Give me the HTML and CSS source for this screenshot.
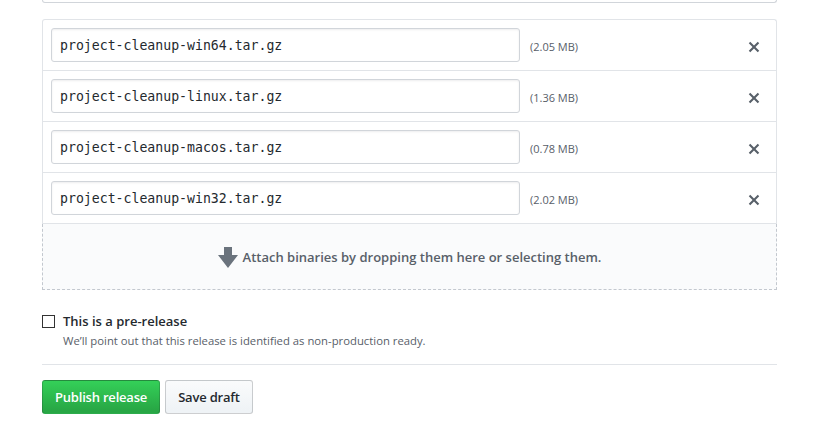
FILE: index.html
```html
<!DOCTYPE html>
<html>
<head>
<meta charset="utf-8">
<link rel="stylesheet" href="styles.css">
</head>
<body>
<div class="page">
  <div class="prev-box"></div>

  <div class="files">
    <div class="file-row">
      <input class="file-name" type="text" value="project-cleanup-win64.tar.gz">
      <span class="file-size">(2.05 MB)</span>
      <button class="remove" aria-label="Remove"><svg width="12" height="16" viewBox="0 0 12 16"><path fill="currentColor" d="M7.48 8l3.75 3.75-1.48 1.48L6 9.48l-3.75 3.75-1.48-1.48L4.52 8 .77 4.25l1.48-1.48L6 6.52l3.75-3.75 1.48 1.48L7.48 8z"/></svg></button>
    </div>
    <div class="file-row">
      <input class="file-name" type="text" value="project-cleanup-linux.tar.gz">
      <span class="file-size">(1.36 MB)</span>
      <button class="remove" aria-label="Remove"><svg width="12" height="16" viewBox="0 0 12 16"><path fill="currentColor" d="M7.48 8l3.75 3.75-1.48 1.48L6 9.48l-3.75 3.75-1.48-1.48L4.52 8 .77 4.25l1.48-1.48L6 6.52l3.75-3.75 1.48 1.48L7.48 8z"/></svg></button>
    </div>
    <div class="file-row">
      <input class="file-name" type="text" value="project-cleanup-macos.tar.gz">
      <span class="file-size">(0.78 MB)</span>
      <button class="remove" aria-label="Remove"><svg width="12" height="16" viewBox="0 0 12 16"><path fill="currentColor" d="M7.48 8l3.75 3.75-1.48 1.48L6 9.48l-3.75 3.75-1.48-1.48L4.52 8 .77 4.25l1.48-1.48L6 6.52l3.75-3.75 1.48 1.48L7.48 8z"/></svg></button>
    </div>
    <div class="file-row">
      <input class="file-name" type="text" value="project-cleanup-win32.tar.gz">
      <span class="file-size">(2.02 MB)</span>
      <button class="remove" aria-label="Remove"><svg width="12" height="16" viewBox="0 0 12 16"><path fill="currentColor" d="M7.48 8l3.75 3.75-1.48 1.48L6 9.48l-3.75 3.75-1.48-1.48L4.52 8 .77 4.25l1.48-1.48L6 6.52l3.75-3.75 1.48 1.48L7.48 8z"/></svg></button>
    </div>
  </div>
  <div class="drop-zone">
    <svg class="drop-icon" width="20" height="21" viewBox="0 3 10 10.5"><path fill="currentColor" d="M7 7V3H3v4H0l5 6.5 5-6.5H7z"/></svg>
    <span>Attach binaries by dropping them here or selecting them.</span>
  </div>

  <div class="prerelease">
    <label class="check-label"><span class="checkbox"></span>This is a pre-release</label>
    <p class="note">We’ll point out that this release is identified as non-production ready.</p>
  </div>

  <hr class="divider">

  <div class="actions">
    <button class="btn btn-primary">Publish release</button>
    <button class="btn">Save draft</button>
  </div>
</div>
</body>
</html>
```

FILE: styles.css
```css
* { box-sizing: border-box; }
html, body { margin: 0; padding: 0; background: #fff; }
body {
  font-family: "Open Sans", "Noto Sans", "Liberation Sans", sans-serif;
  color: #24292e;
  font-size: 14px;
}
.page {
  width: 777px;
  padding-left: 42px;
}
.prev-box {
  height: 3px;
  border: 1px solid #d1d5da;
  border-top: 0;
  border-radius: 0 0 3px 3px;
}
.files {
  margin-top: 16px;
  border: 1px solid #e1e4e8;
  border-bottom: 0;
  border-radius: 3px 3px 0 0;
}
.file-row {
  display: flex;
  align-items: center;
  padding: 8px 16px 8px 8px;
  border-bottom: 1px solid #e1e4e8;
  height: 51px;
}
.file-name {
  width: 469px;
  height: 34px;
  padding: 0 8px;
  border: 1px solid #d1d5da;
  border-radius: 3px;
  box-shadow: inset 0 1px 2px rgba(27,31,35,0.075);
  font-family: "DejaVu Sans Mono", "Liberation Mono", monospace;
  font-size: 13.2px;
  color: #24292e;
  background: #fff;
  outline: none;
}
.file-size {
  margin-left: 10px;
  font-size: 11px;
  color: #586069;
  padding-top: 2px;
  flex: 1;
}
.remove {
  border: 0;
  background: none;
  padding: 0;
  margin: 3px 0 0 0;
  color: #586069;
  width: 12px;
  height: 16px;
  display: flex;
}
.drop-zone {
  height: 66px;
  display: flex;
  align-items: center;
  justify-content: center;
  gap: 5px;
  background: #fafbfc;
  border: 1px dashed #c3c8cf;
  border-top: 0;
  color: #586069;
  font-weight: 600;
  font-size: 13px;
}
.drop-icon { color: #6a737d; margin-top: 1px; }
.prerelease {
  margin-top: 24px;
}
.check-label {
  display: flex;
  align-items: center;
  font-weight: 600;
  font-size: 13px;
  line-height: 14px;
  color: #24292e;
}
.checkbox {
  width: 13px;
  height: 13px;
  border: 1px solid #333;
  margin-right: 8px;
  background: #fff;
}
.note {
  margin: 5px 0 0 21px;
  font-size: 11.3px;
  color: #586069;
}
.divider {
  margin: 16px 0 15px 0;
  border: 0;
  border-top: 1px solid #e1e4e8;
  height: 0;
}
.actions {
  display: flex;
  gap: 5px;
}
.btn {
  height: 34px;
  padding: 0 12px;
  font-family: inherit;
  font-size: 13px;
  letter-spacing: -0.2px;
  font-weight: 600;
  color: #24292e;
  border: 1px solid rgba(27,31,35,0.2);
  border-radius: 3px;
  background: linear-gradient(-180deg, #fafbfc 0%, #eff3f6 90%);
}
.btn-primary {
  color: #fff;
  background: linear-gradient(-180deg, #34d058 0%, #28a745 90%);
}
```
